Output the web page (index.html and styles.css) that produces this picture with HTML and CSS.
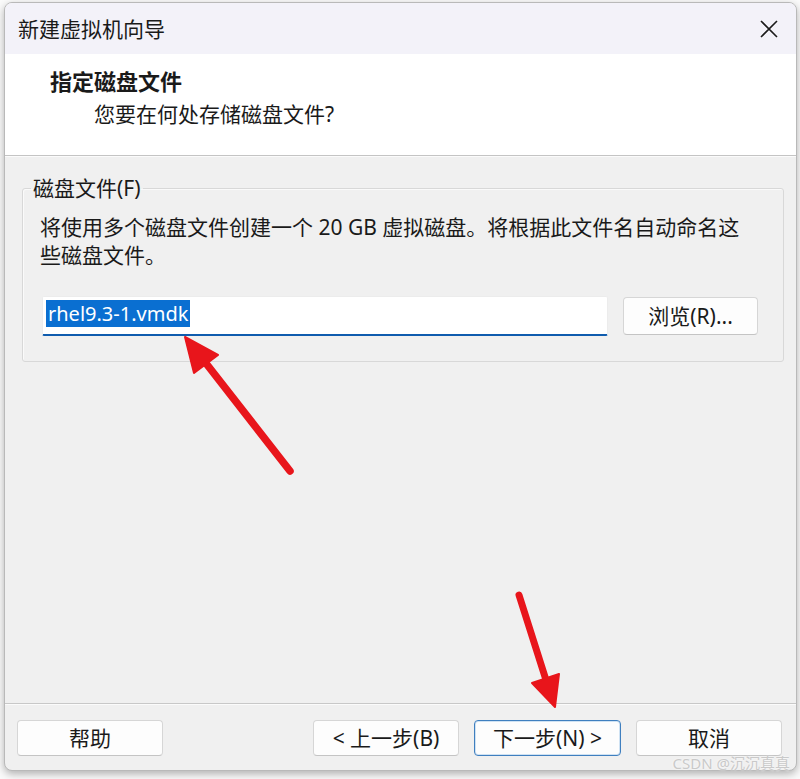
FILE: index.html
```html
<!DOCTYPE html>
<html lang="zh-CN">
<head>
<meta charset="utf-8">
<title>新建虚拟机向导</title>
<link rel="stylesheet" href="styles.css">
</head>
<body>
<div class="window">
  <div class="titlebar">
    <span class="title">新建虚拟机向导</span>
    <svg class="close" width="20" height="20" viewBox="0 0 20 20"><path d="M2 2 L18 18 M18 2 L2 18" stroke="#1b1b1b" stroke-width="1.6" fill="none"/></svg>
  </div>
  <div class="header">
    <div class="h-title">指定磁盘文件</div>
    <div class="h-sub">您要在何处存储磁盘文件?</div>
  </div>
  <div class="content">
    <fieldset class="group">
      <legend>磁盘文件(F)</legend>
      <p class="desc">将使用多个磁盘文件创建一个 20 GB 虚拟磁盘。将根据此文件名自动命名这<br>些磁盘文件。</p>
      <div class="file-row">
        <div class="input"><span class="sel">rhel9.3-1.vmdk</span></div>
        <button class="btn browse">浏览(R)...</button>
      </div>
    </fieldset>
  </div>
  <div class="footer">
    <button class="btn">帮助</button>
    <div class="spacer"></div>
    <button class="btn">&lt; 上一步(B)</button>
    <button class="btn focus">下一步(N) &gt;</button>
    <button class="btn">取消</button>
  </div>
</div>
<svg class="annot" width="800" height="779" viewBox="0 0 800 779">
  <g fill="#e8151b" stroke="#e8151b">
    <line x1="290" y1="471" x2="205" y2="362" stroke-width="7.5" stroke-linecap="round"/>
    <polygon points="185,337 218,355 194,373" stroke-width="2" stroke-linejoin="round"/>
    <line x1="519" y1="595" x2="546" y2="680" stroke-width="7" stroke-linecap="round"/>
    <polygon points="555,707 559,674 532,683" stroke-width="2" stroke-linejoin="round"/>
  </g>
</svg>
<div class="watermark">CSDN @沉沉真真</div>
</body>
</html>
```
FILE: styles.css
```css
* { box-sizing: border-box; }
html, body { margin: 0; padding: 0; }
body {
  width: 800px;
  height: 779px;
  background: #fbfbfb;
  font-family: "Noto Sans", "Noto Sans CJK SC", sans-serif;
  color: #1a1a1a;
  position: relative;
  overflow: hidden;
}
.window {
  margin: 2px 0 0 4px;
  width: 793px;
  height: 769px;
  border: 1px solid #b9b9b9;
  border-radius: 8px;
  background: #f0f0f0;
  display: flex;
  flex-direction: column;
  overflow: hidden;
  box-shadow: 0 3px 9px rgba(0,0,0,0.3);
}
.titlebar {
  height: 51px;
  background: #f3f2f9;
  display: flex;
  align-items: center;
  justify-content: space-between;
  padding: 0 17px 0 13px;
}
.title {
  font-size: 21px;
  line-height: 28px;
}
.close { display: block; }
.header {
  height: 102px;
  background: #ffffff;
  border-bottom: 1px solid #c4c4c4;
  padding: 13px 0 0 45px;
}
.h-title {
  font-size: 22px;
  font-weight: bold;
  line-height: 28px;
}
.h-sub {
  font-size: 21px;
  line-height: 28px;
  margin: 5px 0 0 44px;
}
.content {
  flex: 1;
  border-top: 1px solid #fbfbfb;
  padding: 20px 12px 0 17px;
}
.group {
  margin: 0;
  border: 1px solid #d8d8d8;
  border-radius: 3px;
  box-shadow: inset 1px 1px 0 #fafafa;
  padding: 14px 25px 25px 17px;
}
.group legend {
  font-size: 21px;
  line-height: 22px;
  padding: 0 2px;
  margin-left: -9px;
}
.desc {
  margin: 0;
  font-size: 21px;
  line-height: 28px;
  white-space: nowrap;
}
.file-row {
  margin-top: 27px;
  display: flex;
  align-items: center;
  gap: 15px;
  padding-left: 2px;
}
.input {
  flex: 1;
  height: 40px;
  background: #ffffff;
  border: 1px solid #ececec;
  border-bottom: 2px solid #0f5cae;
  border-radius: 2px;
  padding: 3px 0 0 3px;
}
.sel {
  display: inline-block;
  background: #0a6fd1;
  color: #ffffff;
  font-size: 20px;
  line-height: 27px;
  padding: 0 2px;
}
.btn {
  font-family: "Noto Sans", "Noto Sans CJK SC", sans-serif;
  font-size: 21px;
  line-height: 26px;
  color: #1a1a1a;
  width: 146px;
  height: 36px;
  background: #fdfdfd;
  border: 1px solid #d6d6d6;
  border-bottom-color: #c4c4c4;
  border-radius: 4px;
  padding: 0;
}
.browse {
  width: 135px;
  height: 38px;
}
.footer {
  height: 67px;
  border-top: 1px solid #c8c8c8;
  box-shadow: inset 0 1px 0 #fbfbfb;
  display: flex;
  align-items: flex-start;
  gap: 15px;
  padding: 16px 14px 0 12px;
}
.spacer { flex: 1; }
.focus {
  border: 1px solid #3f7fbf;
  box-shadow: inset 0 0 0 1px #cfe2f3;
  width: 147px;
}
.annot {
  position: absolute;
  left: 0;
  top: 0;
  pointer-events: none;
}
.watermark {
  position: absolute;
  right: 10px;
  bottom: 7px;
  font-size: 15px;
  line-height: 18px;
  color: #c9c9c9;
  text-shadow: 0 0 2px #ffffff;
  font-family: "Noto Sans", "Noto Sans CJK SC", sans-serif;
}
```
